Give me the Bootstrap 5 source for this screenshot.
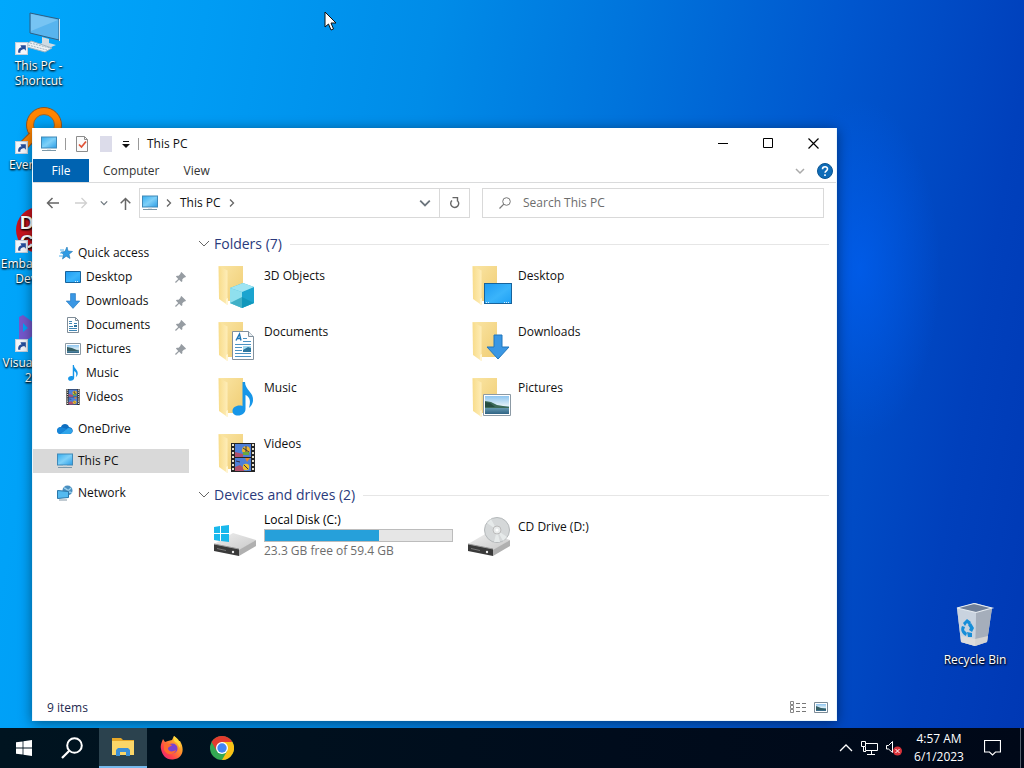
<!DOCTYPE html>
<html lang="en">
<head>
<meta charset="utf-8">
<meta name="viewport" content="width=device-width, initial-scale=1">
<title>This PC</title>
<link rel="stylesheet" href="https://cdn.jsdelivr.net/npm/bootstrap@5.3.0/dist/css/bootstrap.min.css">
<style>
  body { font-family: "Open Sans", "Noto Sans", sans-serif; font-size: 12px; line-height: 16px; color: #111; }
  button { font-size: 12px; color: inherit; background: none; border: 0; padding: 0; }
  a { color: inherit; text-decoration: none; }
  svg { display: block; flex: none; }
  .desktop {
    background:
      radial-gradient(ellipse 80px 170px at 84% 37%, rgba(0,98,250,.6), rgba(0,90,240,0)),
      linear-gradient(100deg, #00a8fc 0%, #009cf4 18%, #008ce8 38%, #0074dc 55%, #0056ce 74%, #0040bc 90%, #0038b4 100%);
  }
  .shortcut-list { width: 77px; }
  .shortcut { height: 99px; padding-top: 10px; line-height: 15px; }
  .shortcut, .bin { color: #fff; text-align: center; text-shadow: 0 1px 2px #000, 1px 1px 2px rgba(0,0,0,.8); }
  .shortcut svg { margin: 0 auto; overflow: visible; }
  .bin { right: 11px; bottom: 60px; width: 76px; }
  .pointer { left: 324px; top: 11px; }
  .explorer { left: 32px; right: 187px; top: 128px; bottom: 7px; background: #fff; border: 1px solid #eaf6fd; border-top: 0; box-shadow: 0 2px 12px rgba(0,0,0,.45); }
  .titlebar { height: 31px; padding-left: 8px; }
  .quick-tools { gap: 8px; }
  .quick-tools button { padding: 0 2px 0 2px; }
  .quick-tools button:last-of-type { padding: 0; }
  .title-sep { width: 1px; height: 12px; background: #999; }
  .caption-btn { width: 45px; height: 31px; }
  .caption-btn:first-child { margin-left: auto; }
  .ribbon { height: 24px; border-bottom: 1px solid #dadbdc; color: #333; }
  .file-tab { width: 56px; background: #0063b1; color: #fff; }
  .ribbon-tab { padding: 0 10px 0 14px; }
  .ribbon-toggle { color: #aaa; }
  .help { margin: 0 3px 0 12px; }
  .address-row { padding: 5px 12px 5px 13px; }
  .address, .search-box { height: 30px; border: 1px solid #d9d9d9; }
  .address { width: 331px; padding-left: 2px; margin-right: 12px; }
  .refresh { width: 30px; border-left: 1px solid #d9d9d9; }
  .search-box input { font-size: 12px; line-height: 16px; border: 0; outline: 0; color: #333; }
  .search-box input::placeholder { color: #6d6d6d; opacity: 1; }
  .side-pane { width: 156px; padding-top: 18px; }
  .side-pane a { height: 24px; gap: 5px; padding-left: 24px; }
  .side-pane a.child { padding-left: 32px; }
  .side-pane .current { background: #d9d9d9; }
  .side-pane .apart { margin-top: 8px; }
  .pin { margin-left: auto; margin-right: 3px; }
  .files { padding: 10px 7px 0 9px; }
  .group-title { font-size: 14px; line-height: 22px; color: #2a3a7c; gap: 4px; margin: 0 0 5px; font-weight: 400; }
  .group-title i { flex: 1; height: 1px; background: #e6e6e6; margin-left: 4px; }
  .tiles { display: grid; grid-template-columns: repeat(auto-fill, 254px); padding-left: 13px; }
  .tile { height: 56px; gap: 5px; }
  .tile svg { margin-top: 1px; }
  .tile-name { padding-top: 8px; }
  .drive-info { padding-top: 1px; color: #6d6d6d; }
  .meter { width: 189px; height: 13px; margin: 1px 0; background: #e6e6e6; border: 1px solid #bcbcbc; border-radius: 0; }
  .meter .progress-bar { background: #26a0da; }
  .status { height: 28px; padding: 3px 8px 0 14px; color: #1e2a50; }
  .taskbar { height: 40px; background: linear-gradient(90deg, #001420, #000c1c 60%, #000818); color: #fff; }
  .task { width: 48px; height: 40px; display: flex; align-items: center; justify-content: center; }
  .task-open { background: #2b424e; border-bottom: 2px solid #76b9ed; margin: 0 1px 0 3px; }
  .clock { line-height: 18px; width: 58px; }
  .tray-end { width: 4px; height: 40px; border-left: 1px solid #56606c; margin-left: 4px; }
</style>
</head>
<body>
<svg width="0" height="0" class="position-absolute" aria-hidden="true">
  <defs>
    <linearGradient id="gScreen" x1="0" y1="0" x2="1" y2="1"><stop offset="0" stop-color="#35aef0"/><stop offset=".5" stop-color="#7fd0f8"/><stop offset="1" stop-color="#2b9de6"/></linearGradient>
    <linearGradient id="gFold" x1="0" y1="0" x2="1" y2="1"><stop offset="0" stop-color="#fae5a4"/><stop offset="1" stop-color="#f0cd74"/></linearGradient>
    <linearGradient id="gFlap" x1="0" y1="0" x2="1" y2="0"><stop offset="0" stop-color="#f8dc8a"/><stop offset="1" stop-color="#feedb8"/></linearGradient>
    <linearGradient id="gDesk" x1="0" y1="0" x2="1" y2="1"><stop offset="0" stop-color="#1e9bf2"/><stop offset=".55" stop-color="#3ab4fb"/><stop offset="1" stop-color="#1ea0f4"/></linearGradient>
    <linearGradient id="gSky" x1="0" y1="0" x2="0" y2="1"><stop offset="0" stop-color="#8ec5f0"/><stop offset=".55" stop-color="#e3f1f6"/><stop offset=".6" stop-color="#6fa3b8"/><stop offset="1" stop-color="#2f6384"/></linearGradient>
    <linearGradient id="gDrive" x1="0" y1="0" x2="1" y2="1"><stop offset="0" stop-color="#efefef"/><stop offset="1" stop-color="#c8c8c8"/></linearGradient>
    <linearGradient id="gFox" x1="1" y1="0" x2="0" y2="1"><stop offset="0" stop-color="#fff14a"/><stop offset=".35" stop-color="#ff9a2a"/><stop offset=".7" stop-color="#ff3f4c"/><stop offset="1" stop-color="#e0208a"/></linearGradient>
    <symbol id="pc" viewBox="0 0 16 16">
      <rect x=".5" y="1" width="15" height="11" fill="url(#gScreen)" stroke="#4089b8"/><path d="M6 12.500h4v1H6z" fill="#b9cdd8"/><path d="M1 14.500h14" stroke="#7d98a8"/>
    </symbol>
    <symbol id="folder" viewBox="0 0 48 48">
      <path d="M8 5h24v35H13z" fill="url(#gFold)"/><path d="M7.500 5l9 4.500V44L8 38z" fill="url(#gFlap)"/><path d="M15 38l2-1v7l-2-1z" fill="#fff4d0"/>
    </symbol>
    <symbol id="desk" viewBox="0 0 28 22"><rect x=".5" y=".5" width="27" height="20" fill="url(#gDesk)" stroke="#17639c"/><path d="M2 19.500h3M20 19.500h6" stroke="#d8efff" stroke-dasharray="1 1"/></symbol>
    <symbol id="down" viewBox="0 0 24 26"><path d="M8 1h8v12h7L12 25 1 13h7z" fill="#3a97e4" stroke="#2177bd"/></symbol>
    <symbol id="doc" viewBox="0 0 22 29">
      <path d="M.5.500h16l5 5v23H.5z" fill="#fff" stroke="#81909c"/><path d="M16.500.500v5h5" fill="#e8edf1" stroke="#81909c"/>
      <path d="M4 9.500L7.500 3l1.500 6.500M5.500 7.500h3" fill="none" stroke="#1d76b8" stroke-width="1.400"/><path d="M11 7.500h4M11 10.500h8M3 13.500h16M3 16.500h7M3 19.500h7M3 22.500h16M3 25.500h16" stroke="#4c93c2"/><rect x="11" y="15" width="8" height="6" fill="#2e78a0"/><path d="M11 15h8v2l-3-1-5 3z" fill="#a8dcf0"/>
    </symbol>
    <symbol id="pict" viewBox="0 0 28 22"><path d="M.5.500h27v21H.5z" fill="#fff" stroke="#8c9aa5"/><path d="M2 2h24v18H2z" fill="url(#gSky)"/><path d="M2 7l6 1 6 3 12 2v1H2z" fill="#3d6b58"/><path d="M2 8l5 1 5 4H2z" fill="#264d40"/></symbol>
    <symbol id="note" viewBox="0 0 22 34"><path d="M10.500 0h2.500c0 8 9 10 8 19-.4 3-2 5-4 7 2-7 1-11-3.500-13v14c0 4-3.500 6.500-7.500 6.500C2.500 33.500.5 31.500.5 29c0-4 5-6.500 10-5z" fill="#1796e8"/></symbol>
    <symbol id="film" viewBox="0 0 24 29">
      <path d="M0 0h24v29H0z" fill="#252525"/><path d="M2 1v28M22 1v28" stroke="#e9e3cf" stroke-width="2" stroke-dasharray="2 2"/><path d="M4 1h16v13H4zM4 15h16v13H4z" fill="#4e7fd8"/>
      <path d="M4 9l4 1 4 1v3H4zM4 24l5-2 4 3v3H4z" fill="#b0506c"/><ellipse cx="15" cy="7" rx="4" ry="3.800" fill="#edb52d"/><path d="M15 3v8M12 5l6 4" stroke="#2b3850"/><path d="M12 9h6v3h-6z" fill="#68a843"/><path d="M14 15l2 4 3-4z" fill="#e2852d"/><circle cx="15" cy="24" r="3.200" fill="#f0c02d"/><path d="M13 22l4 4M5 18l4 1" stroke="#343047"/>
    </symbol>
    <symbol id="pinned" viewBox="0 0 12 12"><path d="M7 0l5 5-1 1h-1L8 8v2L7 11 4.500 8.500 1 12l-1-1 3.500-3.500L1 5l1-1h2l2-2V1z" fill="#969ca2"/></symbol>
    <symbol id="link" viewBox="0 0 12 12"><path d="M.5.500h11v11H.5z" fill="#f5f7fb" stroke="#c3cfdb"/><path d="M3 10C2.500 7 4 5 6 5L5 3h5v5L8.500 6.500C6 7 4.500 8 5 10z" fill="#264f9c"/></symbol>
    <symbol id="chev" viewBox="0 0 10 10"><path d="M1 3l4 4 4-4" fill="none" stroke="currentColor" stroke-width="1.500"/></symbol>
    <symbol id="drivebox" viewBox="0 0 44 24"><path d="M1 11L20 0l23 7-17 11z" fill="url(#gDrive)"/><path d="M26 17L43 7v6L26 23z" fill="#b0b0b0"/><path d="M1 11l25 5v7L1 18z" fill="#3a3a3a"/><path d="M1 11l25 5" stroke="#999"/><path d="M4 15.500l9 2" stroke="#777"/><circle cx="20" cy="19" r="1.200" fill="#eee"/></symbol>
  </defs>
</svg>

<div class="min-vh-100 d-flex flex-column">
  <main class="desktop flex-grow-1 position-relative overflow-hidden">
    <div class="shortcut-list d-flex flex-column">
      <a href="#" class="shortcut d-block">
        <svg width="48" height="48" viewBox="0 0 48 48"><path d="M15 3l29 6v21l-29-7z" fill="#58b4ee" stroke="#2f5f83"/><path d="M16 4l27 6-27 11z" fill="#84cbf5" opacity=".7"/><path d="M44.500 9v22" stroke="#d6e6ef"/><path d="M27 27l7 2v4l7 2-7 3-11-3 4-2z" fill="#cfdbe3"/><path d="M12 34l4-3 21 7-7 4-18-5z" fill="#eef2f5" stroke="#9fb4c2"/><path d="M13 35l19 5M15 33l20 5" stroke="#9fb4c2" stroke-dasharray="2 1"/><use href="#link" x="0" y="32" width="13" height="13"/></svg>
        This PC -<br>Shortcut
      </a>
      <a href="#" class="shortcut d-block">
        <svg width="48" height="48" viewBox="0 0 48 48"><circle cx="29" cy="16" r="14" fill="none" stroke="#ff8400" stroke-width="7"/><circle cx="29" cy="16" r="17.500" fill="none" stroke="#8b5526"/><circle cx="29" cy="16" r="10.500" fill="none" stroke="#a96523"/><path d="M18 27L5 40" stroke="#9a5820" stroke-width="10"/><path d="M19 26L5 40" stroke="#ff8400" stroke-width="8"/><use href="#link" x="0" y="32" width="13" height="13"/></svg>
        Everything
      </a>
      <a href="#" class="shortcut d-block">
        <svg width="48" height="48" viewBox="0 0 48 48" font-family="Liberation Sans, sans-serif" font-size="19" font-weight="700" fill="#fff"><circle cx="24" cy="22" r="23" fill="#c8141e"/><text x="5" y="21">D</text><text x="5" y="40">C</text><use href="#link" x="0" y="32" width="13" height="13"/></svg>
        Embarcadero Dev-C++
      </a>
      <a href="#" class="shortcut d-block">
        <svg width="48" height="48" viewBox="0 0 48 48"><path d="M4 10l4-2 11 8L34 4l10 5v28l-10 5-15-14-11 8-4-2zM8 16v9l5-4z" fill="#7458cc" fill-rule="evenodd"/><use href="#link" x="0" y="32" width="13" height="13"/></svg>
        Visual Studio 2022
      </a>
    </div>

    <svg class="pointer position-absolute" width="13" height="20" viewBox="0 0 13 20"><path d="M1 1v15l3.500-3 2.500 6 2.500-1-2.500-6H12z" fill="#fff" stroke="#111"/></svg>

    <a href="#" class="bin position-absolute text-nowrap">
      <svg class="mx-auto mb-1" width="44" height="46" viewBox="0 0 44 46"><path d="M4 6L22 1l17 5-5 34-12 4-14-4z" fill="#c5d0dc"/><path d="M23 10l16-4-5 34-12 4z" fill="#a5aebb"/><path d="M4 6l19 5-1 33-14-4z" fill="#c9d3df"/><path d="M8 34l14 3 13-3-1 6-12 4-14-4z" fill="#e3dfdb" opacity=".75"/><path d="M4 6L21 1.500 39 6l-16 4.500z" fill="#6f7f97" stroke="#e7edf2" stroke-width="1.200"/><path d="M10 21l4-4 4 3-2 3-2-2-2 3zM9 24l3 1-1 3 3 3-1 3c-4-2-6-6-4-10zM18 21l3 5-2 4-3-2 1-2-2-3zM14 30l5 1v4l-4 0z" fill="#178ed8"/></svg>
      Recycle Bin
    </a>

    <section class="explorer position-absolute d-flex flex-column" aria-label="This PC">
      <header class="titlebar d-flex align-items-center">
        <div class="quick-tools d-flex align-items-center flex-grow-1">
          <svg width="16" height="16"><use href="#pc"/></svg>
          <span class="title-sep"></span>
          <button aria-label="Properties"><svg width="12" height="16" viewBox="0 0 12 16"><path d="M.5.500h8l3 3v12H.5z" fill="#fbfbfb" stroke="#8c8c8c"/><path d="M8.500.500v3h3" fill="none" stroke="#8c8c8c"/><path d="M3 8.500l2.500 2.500L10 5.500" fill="none" stroke="#e05236" stroke-width="1.700"/></svg></button>
          <button aria-label="New folder"><svg width="12" height="16" viewBox="0 0 12 16"><path d="M0 0h12v16H0z" fill="#dcdcea"/></svg></button>
          <button aria-label="Customize toolbar"><svg width="8" height="8" viewBox="0 0 8 8"><path d="M1 1.500h6" stroke="#111"/><path d="M0 4h8L4 8z" fill="#111"/></svg></button>
          <span class="title-sep"></span>
          <span>This PC</span>
        </div>
        <div class="d-flex">
          <button class="caption-btn" aria-label="Minimize"><svg class="mx-auto" width="11" height="11" viewBox="0 0 11 11"><path d="M0 5.500h10" stroke="#000"/></svg></button>
          <button class="caption-btn" aria-label="Maximize"><svg class="mx-auto" width="11" height="11" viewBox="0 0 11 11"><path d="M.5.500h9v9h-9z" fill="none" stroke="#000"/></svg></button>
          <button class="caption-btn" aria-label="Close"><svg class="mx-auto" width="11" height="11" viewBox="0 0 11 11"><path d="M.5.500l10 10m0-10l-10 10" stroke="#000" stroke-width="1.200"/></svg></button>
        </div>
      </header>

      <nav class="ribbon d-flex align-items-stretch" aria-label="Ribbon">
        <button class="file-tab">File</button>
        <button class="ribbon-tab">Computer</button>
        <button class="ribbon-tab">View</button>
        <button class="ribbon-toggle ms-auto" aria-label="Expand ribbon"><svg width="10" height="10"><use href="#chev"/></svg></button>
        <button class="help" aria-label="Help"><svg width="16" height="16" viewBox="0 0 16 16"><circle cx="8" cy="8" r="7.500" fill="#0f6cb8" stroke="#0b5592"/><path d="M5.500 6.200C5.500 3 10.700 3 10.500 6c0 1.800-2.400 1.800-2.400 3.800M8 11.200v1.800" fill="none" stroke="#fff" stroke-width="1.600"/></svg></button>
      </nav>

      <div class="address-row d-flex align-items-center">
        <button aria-label="Back"><svg width="13" height="12" viewBox="0 0 13 12"><path d="M13 6H1.500M6.500 1l-5 5 5 5" fill="none" stroke="#666" stroke-width="1.500"/></svg></button>
        <button class="ms-3" aria-label="Forward"><svg width="13" height="12" viewBox="0 0 13 12"><path d="M0 6h11.500M6.500 1l5 5-5 5" fill="none" stroke="#d0d0d0" stroke-width="1.300"/></svg></button>
        <button class="ms-2 ps-1 text-secondary" aria-label="Recent locations"><svg width="8" height="8"><use href="#chev"/></svg></button>
        <button class="ms-2 ps-1 me-2" aria-label="Up"><svg width="11" height="13" viewBox="0 0 11 13"><path d="M5.500 13V1.500M.7 6.300l4.800-4.800 4.800 4.800" fill="none" stroke="#666" stroke-width="1.500"/></svg></button>
        <div class="address d-flex align-items-center">
          <svg width="16" height="16"><use href="#pc"/></svg>
          <svg class="mx-2" width="6" height="8" viewBox="0 0 6 8"><path d="M1 .5L4.500 4 1 7.500" fill="none" stroke="#666" stroke-width="1.300"/></svg>
          <a href="#">This PC</a>
          <svg class="mx-2" width="6" height="8" viewBox="0 0 6 8"><path d="M1 .5L4.500 4 1 7.500" fill="none" stroke="#666" stroke-width="1.300"/></svg>
          <button class="ms-auto me-2 text-secondary" aria-label="Previous locations"><svg width="12" height="12"><use href="#chev"/></svg></button>
          <button class="refresh align-self-stretch" aria-label="Refresh"><svg class="mx-auto" width="12" height="12" viewBox="0 0 12 12"><path d="M8 3.200a4 4 0 1 1-5 .3M3.500 .6h5v4" fill="none" stroke="#666" stroke-width="1.400"/></svg></button>
        </div>
        <label class="search-box d-flex align-items-center flex-grow-1 px-3">
          <svg width="12" height="12" viewBox="0 0 12 12"><circle cx="7.500" cy="4.500" r="3.800" fill="none" stroke="#777"/><path d="M4.800 7.200L.5 11.500" stroke="#777" stroke-width="1.200"/></svg>
          <input class="flex-grow-1 p-0 ms-2 ps-1" type="search" placeholder="Search This PC" aria-label="Search This PC">
        </label>
      </div>

      <div class="d-flex flex-grow-1">
        <nav class="side-pane flex-shrink-0" aria-label="Navigation pane">
          <a href="#" class="d-flex align-items-center"><svg width="16" height="16" viewBox="0 0 16 16"><path d="M10 2l1 4 4.500.5-3.500 2.700 1 4.300-3.800-2.300L5.500 14l1-4.300L4 7l3.800-.4z" fill="#2e9be4" stroke="#1b73b3" stroke-width=".6"/><path d="M3 5h4M3 8h3M2 11h4" stroke="#53b3ee"/></svg>Quick access</a>
          <a href="#" class="child d-flex align-items-center"><svg width="16" height="13" viewBox="0 0 16 13"><path d="M.5.500h15v11H.5z" fill="url(#gDesk)" stroke="#17639c"/><path d="M10 10.500h4" stroke="#d8efff" stroke-dasharray="1 1"/></svg>Desktop<svg class="pin" width="11" height="11"><use href="#pinned"/></svg></a>
          <a href="#" class="child d-flex align-items-center"><svg width="16" height="16"><use href="#down"/></svg>Downloads<svg class="pin" width="11" height="11"><use href="#pinned"/></svg></a>
          <a href="#" class="child d-flex align-items-center"><svg width="16" height="16" viewBox="0 0 16 16"><path d="M2.500.500h8l3 3v12h-11z" fill="#fff" stroke="#7f8d98"/><path d="M10.500.500v3h3" fill="none" stroke="#7f8d98"/><path d="M4 4.500h3M4 6.500h3M9 6.500h3M4 9.500h4M4 11.500h8M4 13.500h8" stroke="#3e86b5"/><path d="M9 8h3v2H9z" fill="#2b6f9a"/></svg>Documents<svg class="pin" width="11" height="11"><use href="#pinned"/></svg></a>
          <a href="#" class="child d-flex align-items-center"><svg width="16" height="12" viewBox="0 0 16 12"><path d="M.5.500h15v11H.5z" fill="#fff" stroke="#8c9aa5"/><path d="M2 2h12v8H2z" fill="url(#gSky)"/><path d="M2 4l5 1 7 3H2z" fill="#365f64"/></svg>Pictures<svg class="pin" width="11" height="11"><use href="#pinned"/></svg></a>
          <a href="#" class="child d-flex align-items-center"><svg width="16" height="16"><use href="#note"/></svg>Music</a>
          <a href="#" class="child d-flex align-items-center"><svg width="16" height="16"><use href="#film"/></svg>Videos</a>
          <a href="#" class="apart d-flex align-items-center"><svg width="16" height="16" viewBox="0 0 16 16"><path d="M4 6c1-4 7-4 8 0 5 .5 5 7 0 7H4C-1 13-1 6 4 6z" fill="#0f6fc0"/><path d="M3 13l8-6c5-1 6 6 1 6z" fill="#2fa4ea"/><path d="M1 7c3-2 6 0 9 1l-7 5C0 13-1 9 1 7z" fill="#1785d8"/></svg>OneDrive</a>
          <a href="#" class="apart current d-flex align-items-center" aria-current="page"><svg width="16" height="16"><use href="#pc"/></svg>This PC</a>
          <a href="#" class="apart d-flex align-items-center"><svg width="16" height="16" viewBox="0 0 16 16"><circle cx="10.500" cy="5.500" r="5" fill="#4a8fc0"/><path d="M7 3c3 0 2 3 5 2l2-2M9 8l4-1 2 1" fill="none" stroke="#9ed2ee" stroke-width="1.300"/><path d="M.5 5.500l11 1v6l-11 1z" fill="#54baf0" stroke="#2a76a8"/><path d="M2 15h8" stroke="#8398a5"/></svg>Network</a>
        </nav>

        <div class="files flex-grow-1">
          <h2 class="group-title d-flex align-items-center"><svg width="12" height="10" viewBox="0 0 12 10"><path d="M1 2l5 5 5-5" fill="none" stroke="#666"/></svg>Folders (7)<i></i></h2>
          <div class="tiles">
            <a href="#" class="tile d-flex"><svg width="48" height="48" viewBox="0 0 48 48"><use href="#folder"/><path d="M19 27l13-5 11 4v16l-12 5-12-5z" fill="#35b8d8"/><path d="M19 27l12 4v16l-12-5z" fill="#8fe0ee"/><path d="M31 31l12-5v16l-12 5z" fill="#1ba4cf"/><path d="M19 27l13-5 11 4-12 5z" fill="#9fe4f2"/><path d="M19 42l12-6 12 6-12 5z" fill="#0c8fae" opacity=".6"/></svg><span class="tile-name">3D Objects</span></a>
            <a href="#" class="tile d-flex"><svg width="48" height="48" viewBox="0 0 48 48"><use href="#folder"/><use href="#desk" x="19" y="22" width="28" height="22"/></svg><span class="tile-name">Desktop</span></a>
            <a href="#" class="tile d-flex"><svg width="48" height="48" viewBox="0 0 48 48"><use href="#folder"/><use href="#doc" x="21" y="14" width="22" height="29"/></svg><span class="tile-name">Documents</span></a>
            <a href="#" class="tile d-flex"><svg width="48" height="48" viewBox="0 0 48 48"><use href="#folder"/><use href="#down" x="21" y="17" width="24" height="26"/></svg><span class="tile-name">Downloads</span></a>
            <a href="#" class="tile d-flex"><svg width="48" height="48" viewBox="0 0 48 48"><use href="#folder"/><use href="#note" x="21" y="9" width="22" height="34"/></svg><span class="tile-name">Music</span></a>
            <a href="#" class="tile d-flex"><svg width="48" height="48" viewBox="0 0 48 48"><use href="#folder"/><use href="#pict" x="18" y="21" width="28" height="22"/></svg><span class="tile-name">Pictures</span></a>
            <a href="#" class="tile d-flex"><svg width="48" height="48" viewBox="0 0 48 48"><use href="#folder"/><use href="#film" x="20" y="14" width="24" height="29"/></svg><span class="tile-name">Videos</span></a>
          </div>
          <h2 class="group-title d-flex align-items-center"><svg width="12" height="10" viewBox="0 0 12 10"><path d="M1 2l5 5 5-5" fill="none" stroke="#666"/></svg>Devices and drives (2)<i></i></h2>
          <div class="tiles">
            <a href="#" class="tile d-flex"><svg width="48" height="48" viewBox="0 0 48 48"><use href="#drivebox" x="2" y="21" width="44" height="24"/><path d="M3 15l6-1v7H3zM10 14l8-1v8h-8zM3 22h6v7l-6-1zM10 22h8v8l-8-1z" fill="#1ab8ec"/></svg>
              <div class="drive-info"><div class="text-black">Local Disk (C:)</div><div class="progress meter" role="progressbar" aria-label="Used space" aria-valuenow="61" aria-valuemin="0" aria-valuemax="100"><div class="progress-bar" style="width:61%"></div></div><div>23.3 GB free of 59.4 GB</div></div></a>
            <a href="#" class="tile d-flex"><svg width="48" height="48" viewBox="0 0 48 48"><use href="#drivebox" x="2" y="21" width="44" height="24"/><circle cx="32" cy="18" r="12.500" fill="#d5d8d9" stroke="#b4b8ba"/><path d="M32 18L22 11l4-4zM32 18l10 7-4 4zM32 18l-3 12h6z" fill="#e6eaea"/><circle cx="32" cy="18" r="4" fill="#e8ebeb" stroke="#bbb"/><circle cx="32" cy="18" r="1.500" fill="#fff"/></svg><span class="tile-name">CD Drive (D:)</span></a>
          </div>
        </div>
      </div>

      <footer class="status d-flex align-items-center">
        <span>9 items</span>
        <button class="ms-auto" aria-label="Details view"><svg width="16" height="13" viewBox="0 0 16 13"><path d="M.5.500h3v3h-3zM.5 4.500h3v3h-3zM.5 8.500h3v3h-3z" fill="none" stroke="#888"/><path d="M6 2.500h4M12 2.500h4M6 6.500h4M12 6.500h4M6 10.500h4M12 10.500h4" stroke="#777"/></svg></button>
        <button class="ms-2" aria-label="Large icons view"><svg width="14" height="11" viewBox="0 0 14 11"><path d="M.5.500h13v10H.5z" fill="#fff" stroke="#7c8b97"/><path d="M2 2h10v7H2z" fill="url(#gSky)"/><path d="M2 4l5 2 5 1v1H2z" fill="#365f64"/></svg></button>
      </footer>
    </section>
  </main>

  <footer class="taskbar d-flex align-items-center">
    <button class="task" aria-label="Start"><svg width="16" height="16" viewBox="0 0 16 16"><path d="M0 2.300L6.600 1.400v6.200H0zM7.400 1.300L16 0v7.600H7.400zM0 8.400h6.600v6.200L0 13.700zM7.400 8.400H16V16l-8.600-1.200z" fill="#fff"/></svg></button>
    <button class="task" aria-label="Search"><svg width="22" height="22" viewBox="0 0 22 22"><circle cx="13.500" cy="8.500" r="7.300" fill="none" stroke="#fff" stroke-width="2"/><path d="M8.300 13.700L1 21" stroke="#fff" stroke-width="2.200"/></svg></button>
    <button class="task task-open" aria-label="File Explorer"><svg width="22" height="18" viewBox="0 0 22 18"><path d="M0 0h9l2 2h11v15H0z" fill="#e7a829"/><path d="M0 3h22v14H0z" fill="#fbd668"/><path d="M4 18v-6l2-2h10l2 2v6h-4v-4H8v4z" fill="#3c8fd6"/></svg></button>
    <button class="task" aria-label="Firefox"><svg width="24" height="24" viewBox="0 0 24 24"><path d="M1 13C0 9 2 6 3 3l2 3 3-1 4-1 2-4c2 2 3 3 4 5l2 0c5 8 3 18-7 18.500C6 24 2 19 1 13z" fill="url(#gFox)"/><path d="M14 0c5 3 7 7 6 12l-3-5c-3-1-4-4-3-7z" fill="#ffd83d"/><circle cx="12.500" cy="12.500" r="5" fill="#7b42d1"/><path d="M4 8c3-2 5 0 8 1-1 2-4 1-4 4 1 3 5 3 8 1-1 5-9 6-12 0z" fill="#ff6b2e"/></svg></button>
    <button class="task ms-0 ps-1" aria-label="Chrome"><svg width="24" height="24" viewBox="0 0 24 24"><circle cx="12" cy="12" r="12" fill="#34a853"/><path d="M1.600 6A12 12 0 0 1 22.400 6H12l-5.200 9z" fill="#e33b2e"/><path d="M22.400 6A12 12 0 0 1 12 24l5.200-9L12 6z" fill="#fbc116"/><circle cx="12" cy="12" r="6" fill="#fff"/><circle cx="12" cy="12" r="4.700" fill="#4285f4"/></svg></button>
    <div class="ms-auto d-flex align-items-center">
      <button class="me-2" aria-label="Show hidden icons"><svg width="14" height="8" viewBox="0 0 14 8"><path d="M1 7l6-6 6 6" fill="none" stroke="#fff" stroke-width="1.300"/></svg></button>
      <button class="me-2" aria-label="Network"><svg width="17" height="14" viewBox="0 0 17 14"><path d="M5 2.500h11.500v7H4.500V6M.5.500h4v5h-4zM2.500 5.500v5M6 13.500h8M10.500 10v3M2.500 10.500H5" fill="none" stroke="#fff"/></svg></button>
      <button class="me-2" aria-label="Volume muted"><svg width="16" height="16" viewBox="0 0 16 16"><path d="M.5 5.500h2L6.500 1.500v11l-4-3.500h-2z" fill="none" stroke="#fff"/><circle cx="11.500" cy="11" r="4.500" fill="#d8323a"/><path d="M9.500 9l4 4m0-4l-4 4" stroke="#fff"/></svg></button>
      <button class="clock">4:57 AM<br>6/1/2023</button>
      <button class="task" aria-label="Notifications"><svg width="17" height="16" viewBox="0 0 17 16"><path d="M.5.500h16v11.500h-5L8.500 15l-3-3h-5z" fill="none" stroke="#fff" stroke-width="1.200"/></svg></button>
      <div class="tray-end"></div>
    </div>
  </footer>
</div>
<script src="https://cdn.jsdelivr.net/npm/bootstrap@5.3.0/dist/js/bootstrap.bundle.min.js"></script>
</body>
</html>
